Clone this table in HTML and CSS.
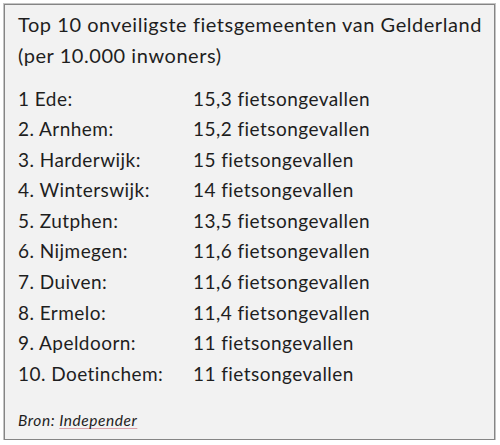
FILE: index.html
```html
<!DOCTYPE html>
<html lang="nl">
<head>
<meta charset="utf-8">
<title>Top 10 onveiligste fietsgemeenten van Gelderland</title>
<link rel="stylesheet" href="styles.css">
</head>
<body>
<div class="card">
  <h1 class="title">Top 10 onveiligste fietsgemeenten van Gelderland<br>(per 10.000 inwoners)</h1>
  <div class="list">
    <span class="name">1 Ede:</span><span class="value">15,3 fietsongevallen</span>
    <span class="name">2. Arnhem:</span><span class="value">15,2 fietsongevallen</span>
    <span class="name">3. Harderwijk:</span><span class="value">15 fietsongevallen</span>
    <span class="name">4. Winterswijk:</span><span class="value">14 fietsongevallen</span>
    <span class="name">5. Zutphen:</span><span class="value">13,5 fietsongevallen</span>
    <span class="name">6. Nijmegen:</span><span class="value">11,6 fietsongevallen</span>
    <span class="name">7. Duiven:</span><span class="value">11,6 fietsongevallen</span>
    <span class="name">8. Ermelo:</span><span class="value">11,4 fietsongevallen</span>
    <span class="name">9. Apeldoorn:</span><span class="value">11 fietsongevallen</span>
    <span class="name">10. Doetinchem:</span><span class="value">11 fietsongevallen</span>
  </div>
  <p class="source">Bron: <a class="link" href="#">Independer</a></p>
</div>
</body>
</html>
```
FILE: styles.css
```css
html, body {
  margin: 0;
  padding: 0;
  background: #ffffff;
}
body {
  padding: 4px 0 0 4px;
  font-family: Lato, "Open Sans", sans-serif;
  color: #1e1e1e;
}
.card {
  box-sizing: border-box;
  width: 491px;
  height: 436px;
  background: #f2f2f2;
  border: 1px solid #858585;
  box-shadow: 0 0 0 1px #c4c4c4;
  padding: 4px 13px 0 13px;
  display: flex;
  flex-direction: column;
}
.title {
  margin: 0;
  font-size: 20px;
  font-weight: 400;
  line-height: 31px;
  letter-spacing: 0.55px;
  white-space: nowrap;
}
.list {
  margin-top: 12.5px;
  display: grid;
  grid-template-columns: 175px auto;
  font-size: 19px;
  line-height: 30.6px;
  letter-spacing: 0.45px;
}
.source {
  margin: 21px 0 0;
  font-size: 15.5px;
  line-height: 20px;
  font-style: italic;
  letter-spacing: 0.55px;
}
.link {
  color: inherit;
  text-decoration: underline;
  text-decoration-color: #dba3ab;
  text-underline-offset: 2px;
}
```
